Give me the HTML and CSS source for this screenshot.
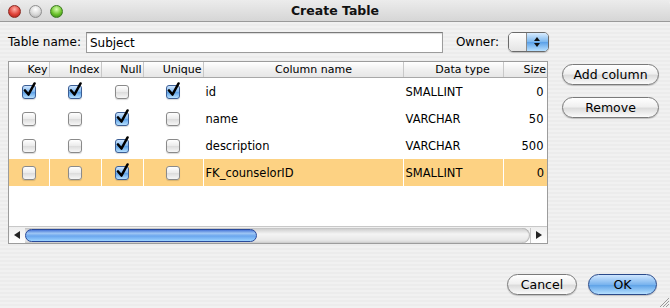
FILE: index.html
```html
<!DOCTYPE html>
<html lang="en">
<head>
    <meta charset="UTF-8">
    <title>Create Table</title>
    <link rel="stylesheet" href="styles.css">
</head>
<body>
    <div class="window">
        <div class="titlebar">
            <div class="lights">
                <span class="light red"></span>
                <span class="light gray"></span>
                <span class="light green"></span>
            </div>
            <div class="title">Create Table</div>
        </div>

        <div class="content">
            <div class="name-row">
                <label class="lbl">Table name:</label>
                <div class="text-field">Subject</div>
                <label class="lbl owner-lbl">Owner:</label>
                <div class="popup">
                    <span class="popup-val"></span>
                    <span class="popup-arrows">
                        <svg width="8" height="12" viewBox="0 0 8 12"><path d="M4 1 L7 5 L1 5 Z M4 11 L7 7 L1 7 Z" fill="#111"/></svg>
                    </span>
                </div>
            </div>

            <div class="main">
                <div class="table-box">
                    <table class="grid">
                        <colgroup>
                            <col style="width:40px"><col style="width:52px"><col style="width:42px"><col style="width:60px">
                            <col style="width:200px"><col style="width:100px"><col style="width:44px">
                        </colgroup>
                        <thead>
                            <tr>
                                <th class="r">Key</th>
                                <th class="r">Index</th>
                                <th class="r">Null</th>
                                <th class="r">Unique</th>
                                <th class="cname">Column name</th>
                                <th class="ctype">Data type</th>
                                <th class="r">Size</th>
                            </tr>
                        </thead>
                        <tbody id="rows"></tbody>
                    </table>
                    <div class="filler"></div>
                    <div class="hscroll">
                        <span class="arrow left">
                            <svg width="6" height="8" viewBox="0 0 6 8"><path d="M6 0 L6 8 L0 4 Z" fill="#222"/></svg>
                        </span>
                        <div class="track">
                            <div class="thumb"></div>
                        </div>
                        <span class="arrow right">
                            <svg width="6" height="8" viewBox="0 0 6 8"><path d="M0 0 L0 8 L6 4 Z" fill="#222"/></svg>
                        </span>
                    </div>
                </div>
                <div class="side">
                    <button class="aqua">Add column</button>
                    <button class="aqua">Remove</button>
                </div>
            </div>

            <div class="footer">
                <button class="aqua cancel">Cancel</button>
                <button class="aqua ok">OK</button>
            </div>
        </div>
        <svg class="grip" width="12" height="12" viewBox="0 0 12 12">
            <path d="M11 2 L2 11 M11 5 L5 11 M11 8 L8 11" stroke="#999" stroke-width="1"/>
        </svg>
    </div>

    <script src="app.js"></script>
</body>
</html>
```

FILE: app.js
```js
// columns of the new table
const columns = [
    { key: true,  index: true,  nul: false, unique: true,  name: 'id',             type: 'SMALLINT', size: 0 },
    { key: false, index: false, nul: true,  unique: false, name: 'name',           type: 'VARCHAR',  size: 50 },
    { key: false, index: false, nul: true,  unique: false, name: 'description',    type: 'VARCHAR',  size: 500 },
    { key: false, index: false, nul: true,  unique: false, name: 'FK_counselorID', type: 'SMALLINT', size: 0, selected: true }
];

const check = '<svg class="tick" width="15" height="16" viewBox="0 0 15 16"><path d="M3 8.5 L6.5 12.5 L12.5 1.5" fill="none" stroke="#000" stroke-width="2.6" stroke-linecap="round" stroke-linejoin="round"/></svg>';

function box(on) {
    return `<span class="cb${on ? ' on' : ''}">${on ? check : ''}</span>`;
}

const tbody = document.getElementById('rows');
columns.forEach(c => {
    tbody.innerHTML += `<tr class="${c.selected ? 'sel' : ''}">
        <td class="c">${box(c.key)}</td>
        <td class="c">${box(c.index)}</td>
        <td class="c">${box(c.nul)}</td>
        <td class="c">${box(c.unique)}</td>
        <td>${c.name}</td>
        <td>${c.type}</td>
        <td class="r">${c.size}</td>
    </tr>`;
});
```

FILE: styles.css
```css
body {
    margin: 0;
    font-family: "DejaVu Sans", "Liberation Sans", sans-serif;
    font-size: 12px;
    color: #000;
    background: #fff;
}
.window {
    position: relative;
    width: 670px;
    height: 308px;
    overflow: hidden;
    background: repeating-linear-gradient(to bottom, #ececec 0, #ececec 2px, #f1f1f1 2px, #f1f1f1 4px);
}
.titlebar {
    position: relative;
    height: 22px;
    background: linear-gradient(to bottom, #ececec, #d6d6d6);
    border-bottom: 1px solid #9a9a9a;
    box-sizing: border-box;
    border-radius: 5px 5px 0 0;
}
.lights {
    position: absolute;
    left: 8px;
    top: 5px;
    display: flex;
    gap: 8px;
}
.light {
    width: 13px;
    height: 13px;
    border-radius: 50%;
    box-sizing: border-box;
}
.light.red {
    background: radial-gradient(circle at 50% 30%, #ffb0a8, #e0443a 55%, #a01810);
    border: 1px solid #8c2a22;
}
.light.gray {
    background: radial-gradient(circle at 50% 30%, #ffffff, #d8d8d8 55%, #a8a8a8);
    border: 1px solid #8e8e8e;
}
.light.green {
    background: radial-gradient(circle at 50% 30%, #d8ffb0, #6cc22c 55%, #2e7a10);
    border: 1px solid #3c7a22;
}
.title {
    text-align: center;
    font-weight: bold;
    font-size: 12.5px;
    line-height: 21px;
    color: #111;
}
.content {
    padding: 9px 0 0 8px;
}
.name-row {
    display: flex;
    align-items: center;
    height: 22px;
}
.lbl {
    font-size: 12px;
}
.text-field {
    margin-left: 5px;
    width: 357px;
    height: 21px;
    box-sizing: border-box;
    background: #fff;
    border: 1px solid #9c9c9c;
    border-top-color: #7a7a7a;
    box-shadow: inset 0 1px 1px rgba(0,0,0,0.15);
    padding: 3px 3px 0;
    font-size: 12px;
}
.owner-lbl {
    margin-left: 13px;
}
.popup {
    margin-left: 9px;
    width: 41px;
    height: 20px;
    box-sizing: border-box;
    border: 1px solid #6a6a6a;
    border-radius: 5px;
    display: flex;
    overflow: hidden;
    box-shadow: 0 1px 1px rgba(0,0,0,0.2);
}
.popup-val {
    flex: 1;
    background: linear-gradient(to bottom, #fdfdfd, #e4e4e4);
    border-right: 1px solid #8a8a8a;
}
.popup-arrows {
    width: 21px;
    display: flex;
    align-items: center;
    justify-content: center;
    background: linear-gradient(to bottom, #d8ecff, #7ab6ee 50%, #5aa0e8 51%, #b8e0ff);
}
.main {
    display: flex;
    margin-top: 8px;
}
.table-box {
    width: 540px;
    height: 183px;
    box-sizing: border-box;
    border: 1px solid #9c9c9c;
    background: #fff;
    display: flex;
    flex-direction: column;
}
.grid {
    border-collapse: collapse;
    table-layout: fixed;
    width: 538px;
    font-size: 11.5px;
}
.grid th {
    height: 15px;
    padding: 0 1px 0 0;
    font-weight: normal;
    font-size: 11px;
    background: linear-gradient(to bottom, #ffffff, #f0f0f0 50%, #e6e6e6);
    border-bottom: 1px solid #a8a8a8;
    border-right: 1px solid #c8c8c8;
    white-space: nowrap;
    overflow: hidden;
}
.grid th:last-child {
    border-right: none;
}
.grid th.cname {
    text-align: center;
    padding-left: 22px;
}
.grid th.ctype {
    text-align: center;
    padding-left: 20px;
}
.r {
    text-align: right;
}
.grid th.r {
    text-align: right;
}
.grid td {
    height: 27px;
    padding: 0 2px;
    white-space: nowrap;
    border-right: 1px solid transparent;
}
.grid td.r {
    padding-right: 3px;
}
.grid td.c {
    text-align: center;
    padding: 0;
}
.grid tr.sel td {
    background: #fdd283;
    border-right-color: #fff;
}
.grid tr.sel td:last-child {
    border-right: none;
}
.cb {
    position: relative;
    display: inline-block;
    vertical-align: middle;
    width: 14px;
    height: 14px;
    box-sizing: border-box;
    border: 1px solid #8a8a8a;
    border-radius: 3px;
    background: linear-gradient(to bottom, #ffffff, #eaeaea 50%, #dcdcdc 51%, #f6f6f6);
    box-shadow: 0 1px 1px rgba(0,0,0,0.15);
}
.cb.on {
    border-color: #3c5e94;
    background: linear-gradient(to bottom, #cfe6ff, #7ab4ee 50%, #5a9fe6 51%, #b6e0ff);
}
.tick {
    position: absolute;
    left: -1px;
    top: -4px;
}
.filler {
    flex: 1;
}
.hscroll {
    height: 16px;
    display: flex;
    align-items: center;
    border-top: 1px solid #c8c8c8;
    background: linear-gradient(to bottom, #eeeeee, #ffffff);
}
.arrow {
    width: 16px;
    height: 15px;
    display: flex;
    align-items: center;
    justify-content: center;
}
.arrow.right {
    border-left: 1px solid #c8c8c8;
}
.track {
    flex: 1;
    height: 15px;
    border-radius: 0 8px 8px 0;
    background: linear-gradient(to bottom, #c8c8c8, #f4f4f4 40%, #e8e8e8 80%, #d0d0d0);
    box-shadow: inset -1px 0 1px rgba(0,0,0,0.25);
}
.thumb {
    width: 232px;
    height: 13px;
    margin-top: 1px;
    border: 1px solid #2a4a9a;
    box-sizing: border-box;
    border-radius: 7px;
    background: linear-gradient(to bottom, #4a78d8, #9ec6f4 30%, #6aa6ee 55%, #9ad2ff);
}
.side {
    display: flex;
    flex-direction: column;
    gap: 12px;
    margin-left: 14px;
    padding-top: 3px;
}
button.aqua {
    height: 21px;
    padding: 0;
    font-family: "DejaVu Sans", "Liberation Sans", sans-serif;
    font-size: 12.5px;
    color: #000;
    border: 1px solid #7a7a7a;
    border-radius: 11px;
    background: linear-gradient(to bottom, #ffffff, #f0f0f0 45%, #dcdcdc 55%, #fbfbfb);
    box-shadow: 0 1px 1px rgba(0,0,0,0.2);
}
.side button.aqua {
    width: 97px;
}
.footer {
    display: flex;
    justify-content: flex-end;
    gap: 11px;
    margin-top: 30px;
    padding-right: 13px;
}
.footer .cancel {
    width: 70px;
}
.footer .ok {
    width: 69px;
    border-color: #2a4a8a;
    background: linear-gradient(to bottom, #cfe6ff, #7ab4ee 50%, #5a9fe6 51%, #b6e0ff);
}
.grip {
    position: absolute;
    right: 0;
    bottom: 0;
}
```
